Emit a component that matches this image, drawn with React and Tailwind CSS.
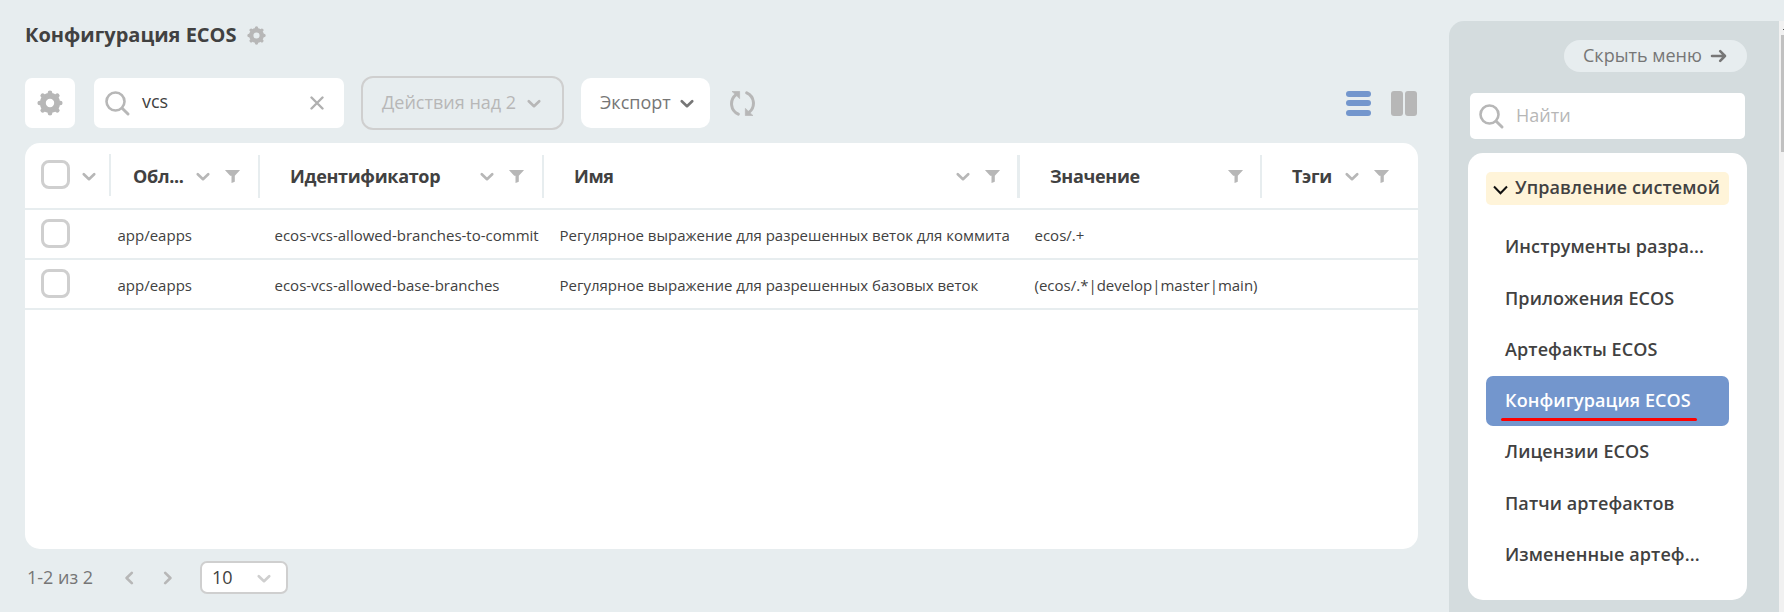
const columns = [
  { title: "Обл...", width: "w-[149px]", rule: "w-[2px]", sort: true },
  { title: "Идентификатор", width: "w-[284px]", rule: "w-[2px]", sort: true },
  { title: "Имя", width: "w-[476px]", rule: "w-[3px]", sort: true },
  { title: "Значение", width: "w-[242px]", rule: "w-[2px]", sort: false },
  { title: "Тэги", width: "w-[156px]", rule: "", sort: true },
];

const rows = [
  ["app/eapps", "ecos-vcs-allowed-branches-to-commit", "Регулярное выражение для разрешенных веток для коммита", "ecos/.+"],
  ["app/eapps", "ecos-vcs-allowed-base-branches", "Регулярное выражение для разрешенных базовых веток", "(ecos/.*|develop|master|main)"],
];

const menu = [
  "Инструменты разра...",
  "Приложения ECOS",
  "Артефакты ECOS",
  "Конфигурация ECOS",
  "Лицензии ECOS",
  "Патчи артефактов",
  "Измененные артеф...",
];

function Gear({ className }) {
  return (
    <svg viewBox="0 0 26 26" className={className} fill="none" stroke="#b7b7b7">
      <circle cx="13" cy="13" r="7.2" strokeWidth="6" />
      {[0, 45, 90, 135].map((a) => (
        <g key={a} transform={`rotate(${a} 13 13)`} strokeWidth="4.6" strokeLinecap="round">
          <path d="M13 2.7v1.4M13 23.3v-1.4" />
        </g>
      ))}
    </svg>
  );
}

function Search() {
  return (
    <svg viewBox="0 0 25 25" className="size-[25px] shrink-0" fill="none" stroke="#b7b7b7" strokeWidth="2.6" strokeLinecap="round">
      <circle cx="10.5" cy="10.5" r="9" />
      <path d="M17.2 17.2l5.8 5.8" strokeWidth="2.9" />
    </svg>
  );
}

function Chevron({ className }) {
  return (
    <svg viewBox="0 0 14 10" className={"h-[10px] w-[14px] shrink-0 " + className} fill="none" stroke="currentColor" strokeWidth="2.6" strokeLinecap="round" strokeLinejoin="round">
      <path d="M1.8 2.2L7 7.2l5.2-5" />
    </svg>
  );
}

function Funnel() {
  return (
    <svg viewBox="0 0 15 13" className="h-[13px] w-[15px] shrink-0" fill="#b7b7b7">
      <path d="M.3 0h14.4q.3.3 0 .6L9.8 5.8v5.4q0 .6-.5.9l-2.8.9V5.8H5.2L.3.6Q0 .3.3 0z" />
    </svg>
  );
}

function Checkbox() {
  return <span className="block size-[29px] shrink-0 rounded-[8px] border-3 border-[#cfcfcf] bg-white" />;
}

export default function App() {
  return (
    <div className="flex h-[612px] w-[1784px] overflow-hidden bg-[#e7edef] font-['Open_Sans',sans-serif] text-[18px] text-[#414141]">
      <main className="flex w-[1449px] flex-col pl-[25px]">
        <div className="flex h-[30px] items-center mt-[20px]">
          <h1 className="w-[222px] text-[20px] leading-[30px] font-bold">Конфигурация ECOS</h1>
          <Gear className="size-[19px]" />
        </div>

        <div className="mt-[26px] flex h-[54px] w-[1392px] items-center">
          <button className="flex size-[50px] items-center justify-center rounded-[7px] bg-white">
            <Gear className="size-[26px]" />
          </button>
          <div className="ml-[19px] flex h-[50px] w-[250px] items-center rounded-[7px] bg-white pr-[20px] pl-[11px]">
            <Search />
            <span className="ml-[12px] flex-1 pb-[4px]">vcs</span>
            <svg viewBox="0 0 14 14" className="size-[14px]" fill="none" stroke="#b0b0b0" strokeWidth="2.4" strokeLinecap="round">
              <path d="M1.5 1.5l11 11M12.5 1.5l-11 11" />
            </svg>
          </div>
          <button className="ml-[17px] flex h-[54px] w-[203px] items-center rounded-[12px] border-2 border-[#cfcfcf] pl-[19px] font-medium text-[#b7b7b7]">
            <span className="w-[145px] pb-[2px] text-left">Действия над 2</span>
            <Chevron className="mt-[2px]" />
          </button>
          <button className="ml-[17px] flex h-[50px] w-[129px] items-center rounded-[10px] bg-white pl-[19px] font-medium text-[#767676]">
            <span className="w-[80px] pb-[2px] text-left">Экспорт</span>
            <Chevron className="mt-[2px]" />
          </button>
          <svg viewBox="0 0 25 25" className="ml-[20px] size-[25px]" fill="none" stroke="#b7b7b7" strokeWidth="3" strokeLinecap="round">
            <path d="M8.3 23.2C.4 19.6-.8 9.2 6 3.6M16.7 1.8C24.6 5.4 25.8 15.8 19 21.4" />
            <path d="M2.4.4h7.2v6.8zM22.6 24.6h-7.2v-6.8z" fill="#b7b7b7" strokeWidth=".8" strokeLinejoin="round" />
          </svg>
          <div className="ml-auto flex items-center gap-[20px]">
            <div className="flex h-[25px] w-[25px] flex-col justify-between">
              <i className="h-[6px] rounded-[3px] bg-[#7396cd]" />
              <i className="h-[6px] rounded-[3px] bg-[#7396cd]" />
              <i className="h-[6px] rounded-[3px] bg-[#7396cd]" />
            </div>
            <div className="flex h-[25px] w-[26px] justify-between">
              <i className="w-[12px] rounded-[3px] bg-[#b7b7b7]" />
              <i className="w-[12px] rounded-[3px] bg-[#b7b7b7]" />
            </div>
          </div>
        </div>

        <section className="mt-[13px] h-[406px] w-[1393px] overflow-hidden rounded-[15px] bg-white">
          <header className="flex h-[67px] border-b-2 border-[#e7edef]">
            <div className="flex w-[86px] pl-[16px]">
              <div className="mt-[17px]"><Checkbox /></div>
              <Chevron className="mt-[29px] ml-[12px] text-[#b7b7b7]" />
              <i className="mt-[11px] ml-auto h-[42px] w-[2px] bg-[#e7edef]" />
            </div>
            {columns.map((c, i) => (
              <div key={c.title} className={"flex pt-[12px] " + c.width}>
                <span className={"flex-1 font-bold leading-[43px] tracking-[-0.32px] " + (i === 0 ? "pl-[22px]" : "pl-[30px]")}>{c.title}</span>
                {c.sort && <Chevron className="mt-[17px] mr-[15px] text-[#b7b7b7]" />}
                <span className={"mt-[15px] " + (i === 4 ? "mr-[29px]" : i < 2 ? "mr-[18px]" : "mr-[17px]")}><Funnel /></span>
                <i className={"h-[43px] bg-[#e7edef] " + c.rule} />
              </div>
            ))}
          </header>
          {rows.map((r) => (
            <div key={r[1]} className="flex h-[50px] border-b-2 border-[#e7edef] text-[15px] leading-[50px]">
              <div className="w-[92.5px] pt-[8.5px] pl-[16px]"><Checkbox /></div>
              <span className="w-[157px]">{r[0]}</span>
              <span className="w-[285px] whitespace-nowrap">{r[1]}</span>
              <span className="w-[475px] whitespace-nowrap">{r[2]}</span>
              <span>{r[3]}</span>
            </div>
          ))}
        </section>

        <footer className="mt-[12px] flex h-[33px] items-center pl-[2px] text-[#767676]">
          <span className="w-[97px] font-medium">1-2 из 2</span>
          <svg viewBox="0 0 10 14" className="mt-[1px] h-[14px] w-[10px]" fill="none" stroke="#b7b7b7" strokeWidth="2.6" strokeLinecap="round" strokeLinejoin="round">
            <path d="M7.8 1.8L2.6 7l5.2 5.2" />
          </svg>
          <svg viewBox="0 0 10 14" className="mt-[1px] ml-[29px] h-[14px] w-[10px]" fill="none" stroke="#b7b7b7" strokeWidth="2.6" strokeLinecap="round" strokeLinejoin="round">
            <path d="M2.2 1.8L7.4 7l-5.2 5.2" />
          </svg>
          <div className="ml-[27px] flex h-[33px] w-[88px] items-center justify-between rounded-[7px] border-2 border-[#cfcfcf] bg-white pr-[15px] pl-[10px] text-[#414141]">
            <span className="font-medium">10</span>
            <Chevron className="mt-[3px] text-[#cfcfcf]" />
          </div>
        </footer>
      </main>

      <aside className="mt-[21px] flex w-[330px] flex-col rounded-tl-[15px] bg-[#d4dcde] pl-[19px]">
        <button className="mt-[19px] ml-[96px] flex h-[32px] w-[183px] items-center rounded-full bg-[#e7edef] pl-[19px] font-medium text-[#767676]">
          <span className="w-[127px] pb-[2px] text-left">Скрыть меню</span>
          <svg viewBox="0 0 18 14" className="h-[14px] w-[18px]" fill="none" stroke="currentColor" strokeWidth="2.6" strokeLinecap="round" strokeLinejoin="round">
            <path d="M2 7h13M10.2 2.2L15 7l-4.8 4.8" />
          </svg>
        </button>
        <div className="mt-[21px] ml-[2px] flex h-[46px] w-[275px] items-center rounded-[5px] bg-white pl-[8.5px] text-[#b7b7b7]">
          <Search />
          <span className="ml-[12.5px] pb-[2px] font-medium">Найти</span>
        </div>
        <nav className="mt-[14px] flex h-[447px] w-[279px] flex-col rounded-[15px] bg-white px-[18px] pt-[19px]">
          <div className="flex h-[33px] items-center rounded-[5px] bg-[#fff4d9] pl-[7px] font-semibold">
            <svg viewBox="0 0 15 10" className="mt-[2px] h-[10px] w-[15px]" fill="none" stroke="#111" strokeWidth="2">
              <path d="M1 1.5l6.5 6.7L14 1.5" />
            </svg>
            <span className="ml-[7px] pb-[2px] tracking-[0.12px] whitespace-nowrap">Управление системой</span>
          </div>
          <ul className="mt-[17.25px] flex flex-col gap-[1.3px] font-semibold tracking-[0.1px]">
            {menu.map((m, i) => (
              <li key={m} className={"relative h-[50px] rounded-[7px] pl-[19px] leading-[49px] whitespace-nowrap " + (i === 3 ? "bg-[#7396cd] text-white" : "")}>
                {m}
                {i === 3 && <i className="absolute top-[42px] left-[15px] h-[3px] w-[196px] rounded-full bg-[#ff0000]" />}
              </li>
            ))}
          </ul>
        </nav>
      </aside>

      <div className="mt-[21px] flex w-[5px] flex-col items-end bg-[#f1f1f1]">
        <i className="mt-[8px] h-px w-px bg-[#505050]" />
        <i className="mt-[5px] h-[117px] w-[3px] bg-[#c1c1c1]" />
      </div>
    </div>
  );
}
